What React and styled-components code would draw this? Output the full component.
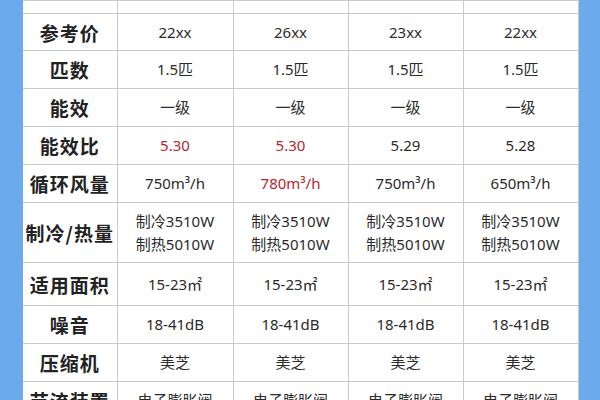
import React from "react";
import styled, { createGlobalStyle } from "styled-components";

const Global = createGlobalStyle`
  html, body { margin: 0; padding: 0; background: #6cabeb; }
  #root { height: 400px; overflow: hidden; }
`;

const Page = styled.div`
  display: flex;
  height: 400px;
  overflow: hidden;
  background: #6cabeb;
  padding: 0 22px 0 23px;
`;

const Sheet = styled.table`
  width: 555px;
  border-collapse: collapse;
  table-layout: fixed;
  background: #fff;
  align-self: flex-start;
  border-right: 1px solid #c9c9c9;
`;

const Col = styled.col`
  width: ${(p) => p.$w}px;
`;

const Row = styled.tr`
  height: ${(p) => p.$h}px;
`;

const Label = styled.th`
  border: 1px solid #c9c9c9;
  border-left: none;
  padding: 0;
  font-family: "Noto Sans CJK SC", sans-serif;
  font-weight: 700;
  font-size: 19px;
  letter-spacing: 1px;
  color: #222;
  text-align: center;
  vertical-align: middle;
  line-height: 1;
`;

const Cell = styled.td`
  border: 1px solid #c9c9c9;
  padding: 0;
  font-family: "Noto Sans", "Noto Sans CJK SC", sans-serif;
  font-size: 15px;
  color: ${(p) => (p.$red ? "#b8262e" : "#2b2b2b")};
  text-align: center;
  vertical-align: middle;
  line-height: 23px;
`;

const widths = [94, 116, 115, 115, 115];

const rows = [
  { h: 13, label: "", vals: ["", "", "", ""] },
  { h: 37, label: "参考价", vals: ["22xx", "26xx", "23xx", "22xx"] },
  { h: 38, label: "匹数", vals: ["1.5匹", "1.5匹", "1.5匹", "1.5匹"] },
  { h: 38, label: "能效", vals: ["一级", "一级", "一级", "一级"] },
  { h: 38, label: "能效比", vals: ["5.30", "5.30", "5.29", "5.28"], red: [0, 1] },
  { h: 38, label: "循环风量", vals: ["750m³/h", "780m³/h", "750m³/h", "650m³/h"], red: [1] },
  { h: 60, label: "制冷/热量", vals: Array(4).fill(["制冷3510W", "制热5010W"]) },
  { h: 43, label: "适用面积", vals: ["15-23㎡", "15-23㎡", "15-23㎡", "15-23㎡"] },
  { h: 38, label: "噪音", vals: ["18-41dB", "18-41dB", "18-41dB", "18-41dB"] },
  { h: 38, label: "压缩机", vals: ["美芝", "美芝", "美芝", "美芝"] },
  { h: 38, label: "节流装置", vals: Array(4).fill("电子膨胀阀") },
];

export default function App() {
  return (
    <>
      <Global />
      <Page>
        <Sheet>
          <colgroup>
            {widths.map((w, i) => (
              <Col key={i} $w={w} />
            ))}
          </colgroup>
          <tbody>
            {rows.map((r, i) => (
              <Row key={i} $h={r.h}>
                <Label>{r.label}</Label>
                {r.vals.map((v, j) => (
                  <Cell key={j} $red={r.red && r.red.includes(j)}>
                    {Array.isArray(v) ? v.map((l) => <div key={l}>{l}</div>) : v}
                  </Cell>
                ))}
              </Row>
            ))}
          </tbody>
        </Sheet>
      </Page>
    </>
  );
}
